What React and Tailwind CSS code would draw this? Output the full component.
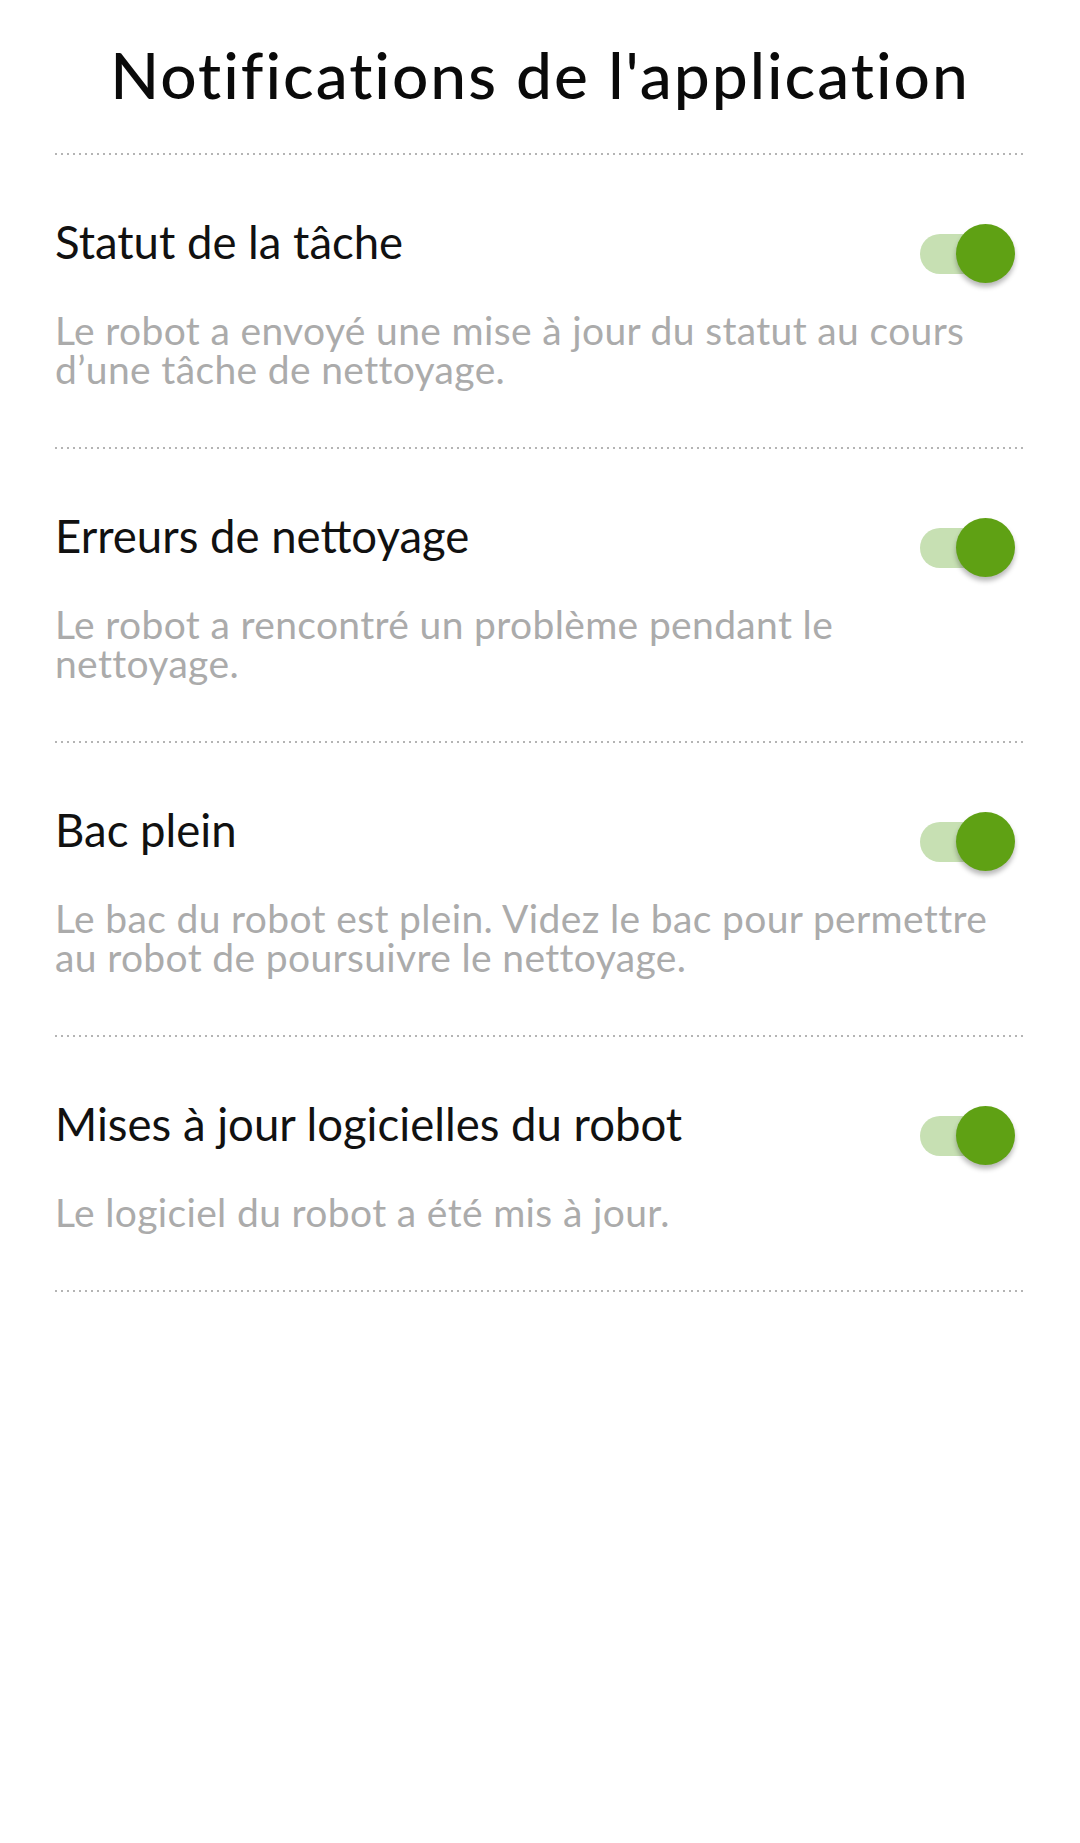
import React from "react";

const items = [
  {
    title: "Statut de la tâche",
    desc: "Le robot a envoyé une mise à jour du statut au cours d’une tâche de nettoyage.",
  },
  {
    title: "Erreurs de nettoyage",
    desc: "Le robot a rencontré un problème pendant le nettoyage.",
  },
  {
    title: "Bac plein",
    desc: "Le bac du robot est plein. Videz le bac pour permettre au robot de poursuivre le nettoyage.",
  },
  {
    title: "Mises à jour logicielles du robot",
    desc: "Le logiciel du robot a été mis à jour.",
  },
];

function Dots() {
  return <div className="h-[2px] w-full bg-[repeating-linear-gradient(to_right,#b4b4b4_0_2px,transparent_2px_6px)]" />;
}

function Toggle() {
  return (
    <div className="relative mr-[10px] mt-[10px] h-[59px] w-[95px] shrink-0">
      <div className="absolute left-0 top-[10px] h-[40px] w-[80px] rounded-full bg-[#c7e0b3]" />
      <div className="absolute right-0 top-0 h-[59px] w-[59px] rounded-full bg-[#5fa114] shadow-[0_4px_5px_rgba(0,0,0,0.28)]" />
    </div>
  );
}

export default function App() {
  return (
    <div className="min-h-[1843px] bg-white px-[55px] font-['Lato',sans-serif]">
      <h1 className="pt-[37px] text-center text-[64px] font-medium leading-[76px] tracking-[2px] text-[#0a0a0a]">
        Notifications de l'application
      </h1>
      <div className="mt-[40px]">
        <Dots />
      </div>
      {items.map((it) => (
        <div key={it.title}>
          <div className="pt-[59px] pb-[58px]">
            <div className="flex items-start justify-between gap-4">
              <div className="text-[45.5px] leading-[56px] text-[#111]">{it.title}</div>
              <Toggle />
            </div>
            <div className="mt-[28px] pr-[20px] text-[39px] leading-[39px] tracking-[0.35px] text-[#ababab]">
              {it.desc}
            </div>
          </div>
          <Dots />
        </div>
      ))}
    </div>
  );
}
